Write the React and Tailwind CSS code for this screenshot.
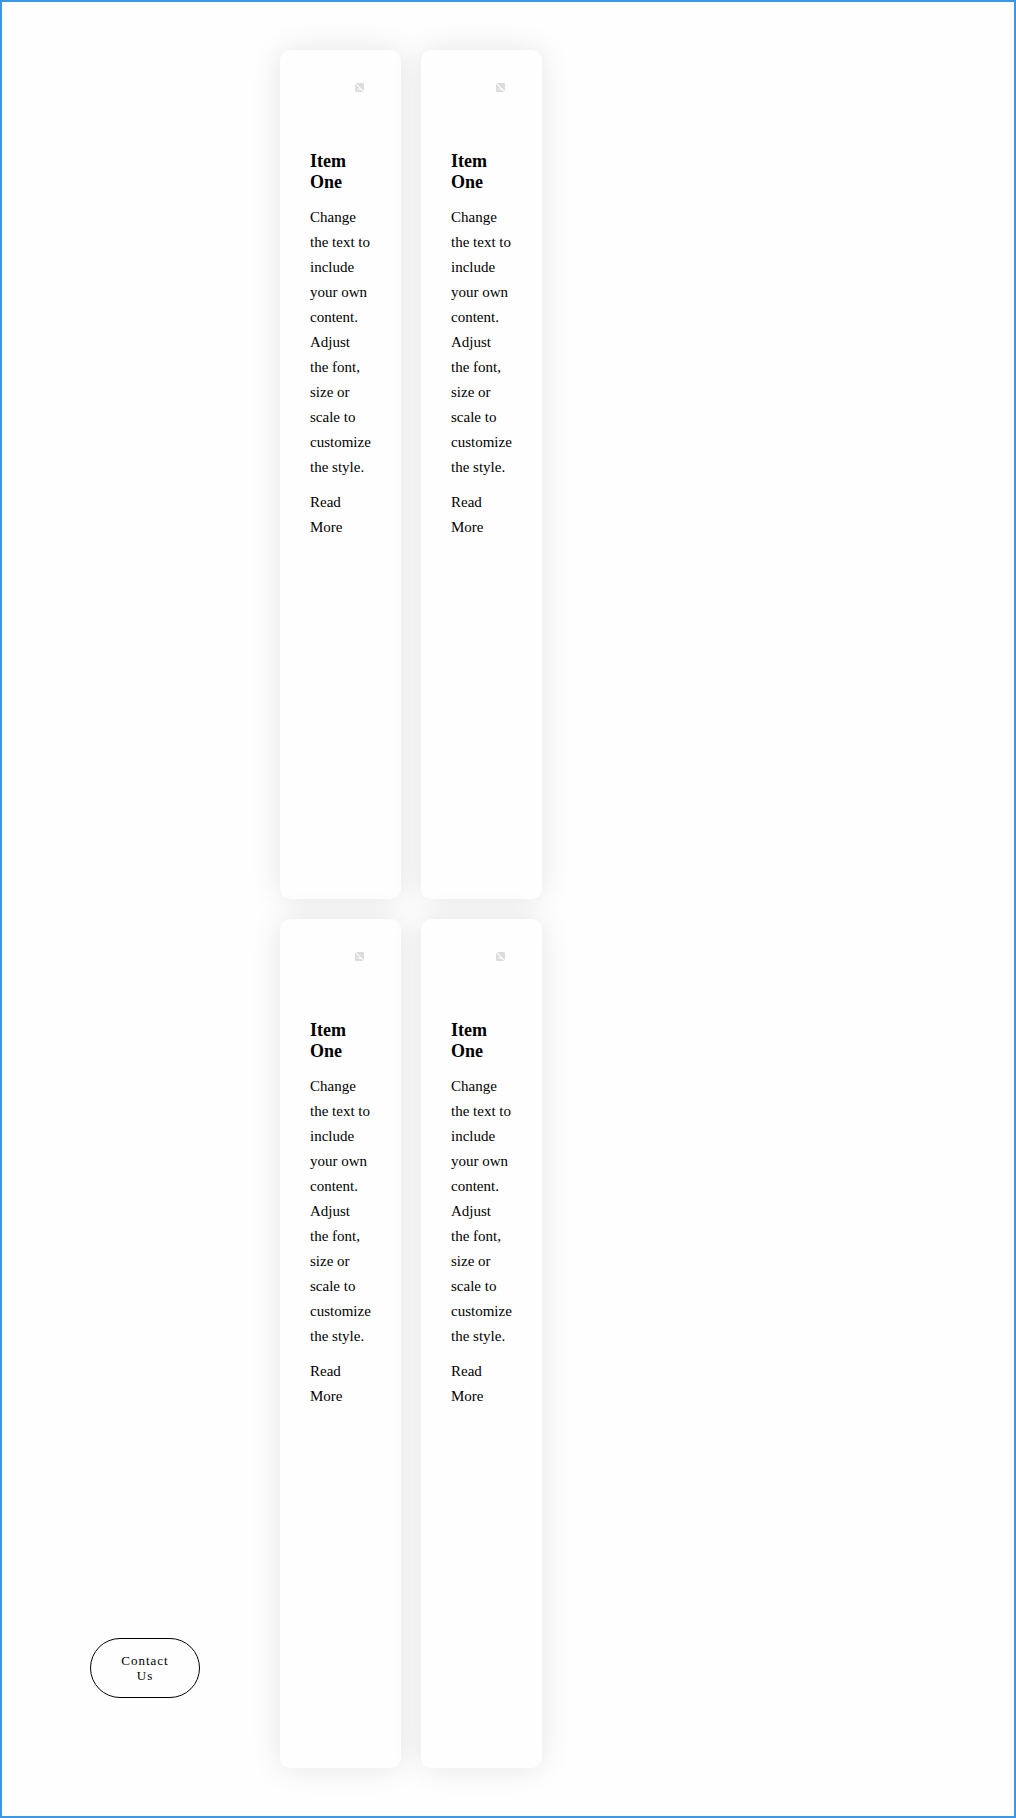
import React from "react";

const cards = [1, 2, 3, 4];

function PlaceholderIcon() {
  return (
    <svg width="10" height="10" viewBox="0 0 10 10" className="mr-[6px] shrink-0 self-end" aria-hidden="true">
      <rect x="0" y="0" width="9" height="9" rx="1" fill="#dcdcdc" />
      <path d="M2 6.5L3 5.5L4 6.5H6.5" fill="none" stroke="#fefefe" strokeWidth="1" />
      <path d="M0 0L9.5 9.5" stroke="#fefefe" strokeWidth="1.1" />
    </svg>
  );
}

function Card() {
  return (
    <article className="flex h-[849px] w-[121px] flex-col rounded-[10px] bg-[#fefefe] px-[30px] pt-[33px] shadow-[0_0_30px_rgba(0,0,0,0.1)]">
      <PlaceholderIcon />
      <h3 className="mt-[58px] text-[18px] leading-[21px] font-bold">Item One</h3>
      <p className="mt-[12px] -mr-1 w-[61px] text-[15px] leading-[25px]">
        Change the text to include your own content. Adjust the font, size or scale to customize the style.
      </p>
      <a className="mt-[10px] w-[61px] text-[15px] leading-[25px]">Read More</a>
    </article>
  );
}

export default function App() {
  return (
    <main className="flex h-[1818px] w-[1016px] items-end border-2 border-[#3d97e8] bg-[#fefefe] pb-[48px] pl-[88px] font-['Liberation_Serif',serif] text-black">
      <button className="mb-[70px] h-[60px] w-[110px] shrink-0 rounded-[30px] border border-black px-[30px] text-center text-[13px] leading-[15px] tracking-[1px]">
        Contact Us
      </button>
      <section className="ml-[80px] grid grid-cols-[121px_121px] gap-[20px]">
        {cards.map((id) => (
          <Card key={id} />
        ))}
      </section>
    </main>
  );
}
